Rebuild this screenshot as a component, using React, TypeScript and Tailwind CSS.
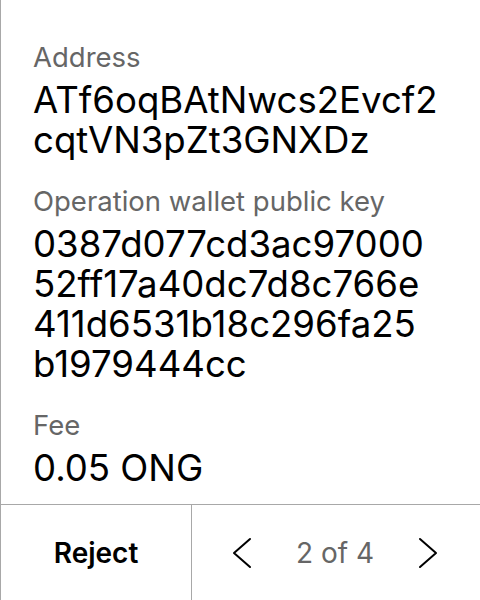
const campos = [
    {rotulo: "Address", valor: ["ATf6oqBAtNwcs2Evcf2", "cqtVN3pZt3GNXDz"]},
    {rotulo: "Operation wallet public key", valor: ["0387d077cd3ac97000", "52ff17a40dc7d8c766e", "411d6531b18c296fa25", "b1979444cc"]},
    {rotulo: "Fee", valor: ["0.05 ONG"]},
];

const Seta = ({dir}: {dir: "esq" | "dir"}) => (
    <svg width="22" height="32" viewBox="0 0 22 32" fill="none" stroke="black" strokeWidth="2" strokeLinecap="round" strokeLinejoin="round">
        {dir === "esq"
            ? <polyline points="19,2 3,16 19,30"/>
            : <polyline points="3,2 19,16 3,30"/>}
    </svg>
);

const App = () => {
    return (
        <div className="w-[480px] h-[600px] bg-white flex flex-col border-l border-[#a8a8a8] font-['Inter',sans-serif]">
            <div className="flex-1 flex flex-col gap-[25px] pl-8 pt-[41px]">
                {campos.map((c) => (
                    <div key={c.rotulo} className="flex flex-col">
                        <span className="text-[27.5px] leading-[32px] text-[#666666] mb-[7px]">{c.rotulo}</span>
                        {c.valor.map((linha) => (
                            <span key={linha} className="text-[36.6px] leading-[40px] text-black">{linha}</span>
                        ))}
                    </div>
                ))}
            </div>
            <div className="h-[96px] flex border-t border-[#a8a8a8]">
                <button className="w-[191px] border-r border-[#a8a8a8] flex items-center justify-center text-[28px] font-semibold text-black">
                    Reject
                </button>
                <div className="flex-1 flex items-center justify-between pl-[39px] pr-[41px]">
                    <Seta dir="esq"/>
                    <span className="text-[28px] text-[#666666]">2 of 4</span>
                    <Seta dir="dir"/>
                </div>
            </div>
        </div>
    );
};

export default App;
